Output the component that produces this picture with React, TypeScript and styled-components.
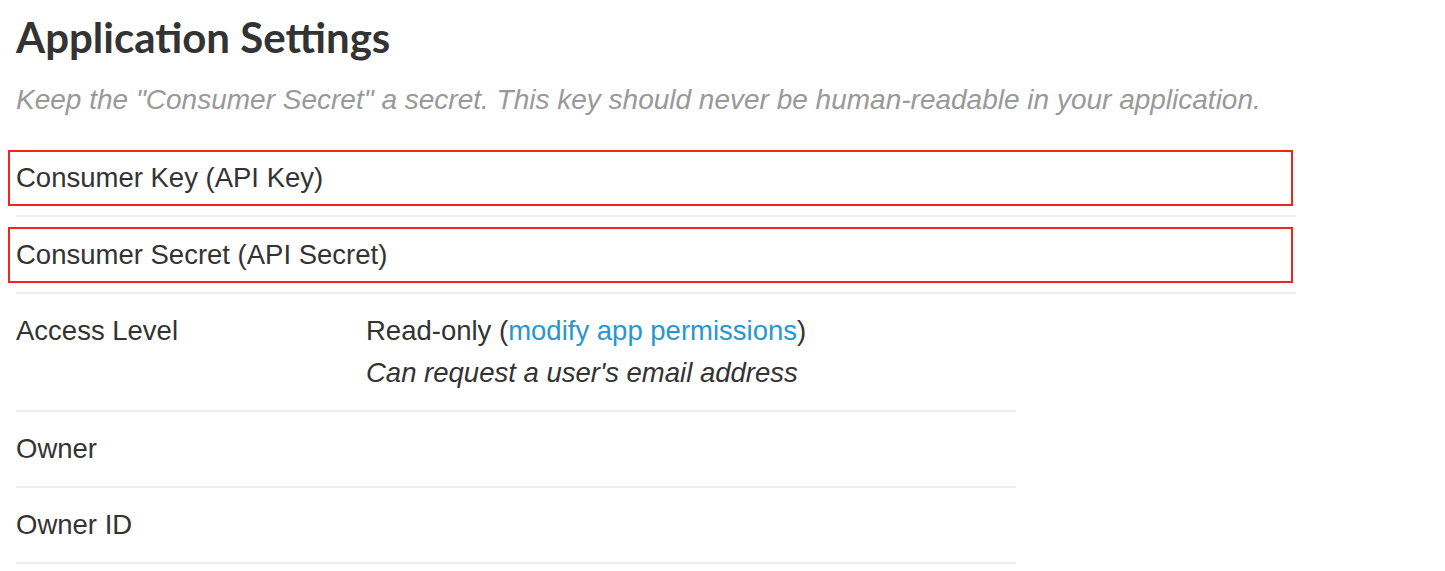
import React from "react";
import styled, { createGlobalStyle } from "styled-components";

const Global = createGlobalStyle`
  html, body { margin: 0; padding: 0; background: #fff; }
  body { font-family: "Liberation Sans", Arial, sans-serif; color: #333; }
`;

const Page = styled.div`
  padding: 12px 16px 0 16px;
`;

const Title = styled.h1`
  margin: 0;
  font-family: Lato, "Open Sans", sans-serif;
  font-weight: 700;
  font-size: 42px;
  line-height: 50px;
  color: #333;
`;

const Subtitle = styled.p`
  margin: 22px 0 0 0;
  font-style: italic;
  font-size: 28px;
  line-height: 32px;
  color: #999;
  white-space: nowrap;
`;

const KeyTable = styled.div`
  width: 1280px;
  margin-top: 24px;
`;

const KeyRow = styled.div`
  padding: 10px 0 9px 0;
  border-bottom: 2px solid #eeeeee;
`;

const Highlight = styled.div`
  box-sizing: border-box;
  margin-left: -8px;
  width: 1285px;
  height: 56px;
  border: 2px solid #f0261e;
  padding-left: 6px;
  display: flex;
  align-items: center;
  font-size: 27.5px;
  color: #333;
`;

const DetailTable = styled.div`
  width: 1000px;
`;

const Row = styled.div`
  display: flex;
  padding: 16px 0;
  border-bottom: 2px solid #eeeeee;
  font-size: 27.5px;
  line-height: 42px;
`;

const Label = styled.div`
  width: 350px;
  flex: none;
`;

const Value = styled.div`
  flex: 1;
`;

const Note = styled.div`
  font-style: italic;
`;

const Link = styled.a`
  color: #2a96cc;
  text-decoration: none;
`;

export default function App() {
  return (
    <>
      <Global />
      <Page>
        <Title>Application Settings</Title>
        <Subtitle>
          Keep the "Consumer Secret" a secret. This key should never be human-readable in your application.
        </Subtitle>
        <KeyTable>
          <KeyRow>
            <Highlight>Consumer Key (API Key)</Highlight>
          </KeyRow>
          <KeyRow>
            <Highlight>Consumer Secret (API Secret)</Highlight>
          </KeyRow>
        </KeyTable>
        <DetailTable>
          <Row>
            <Label>Access Level</Label>
            <Value>
              <div>
                Read-only (<Link href="#">modify app permissions</Link>)
              </div>
              <Note>Can request a user's email address</Note>
            </Value>
          </Row>
          <Row>
            <Label>Owner</Label>
            <Value />
          </Row>
          <Row>
            <Label>Owner ID</Label>
            <Value />
          </Row>
        </DetailTable>
      </Page>
    </>
  );
}
